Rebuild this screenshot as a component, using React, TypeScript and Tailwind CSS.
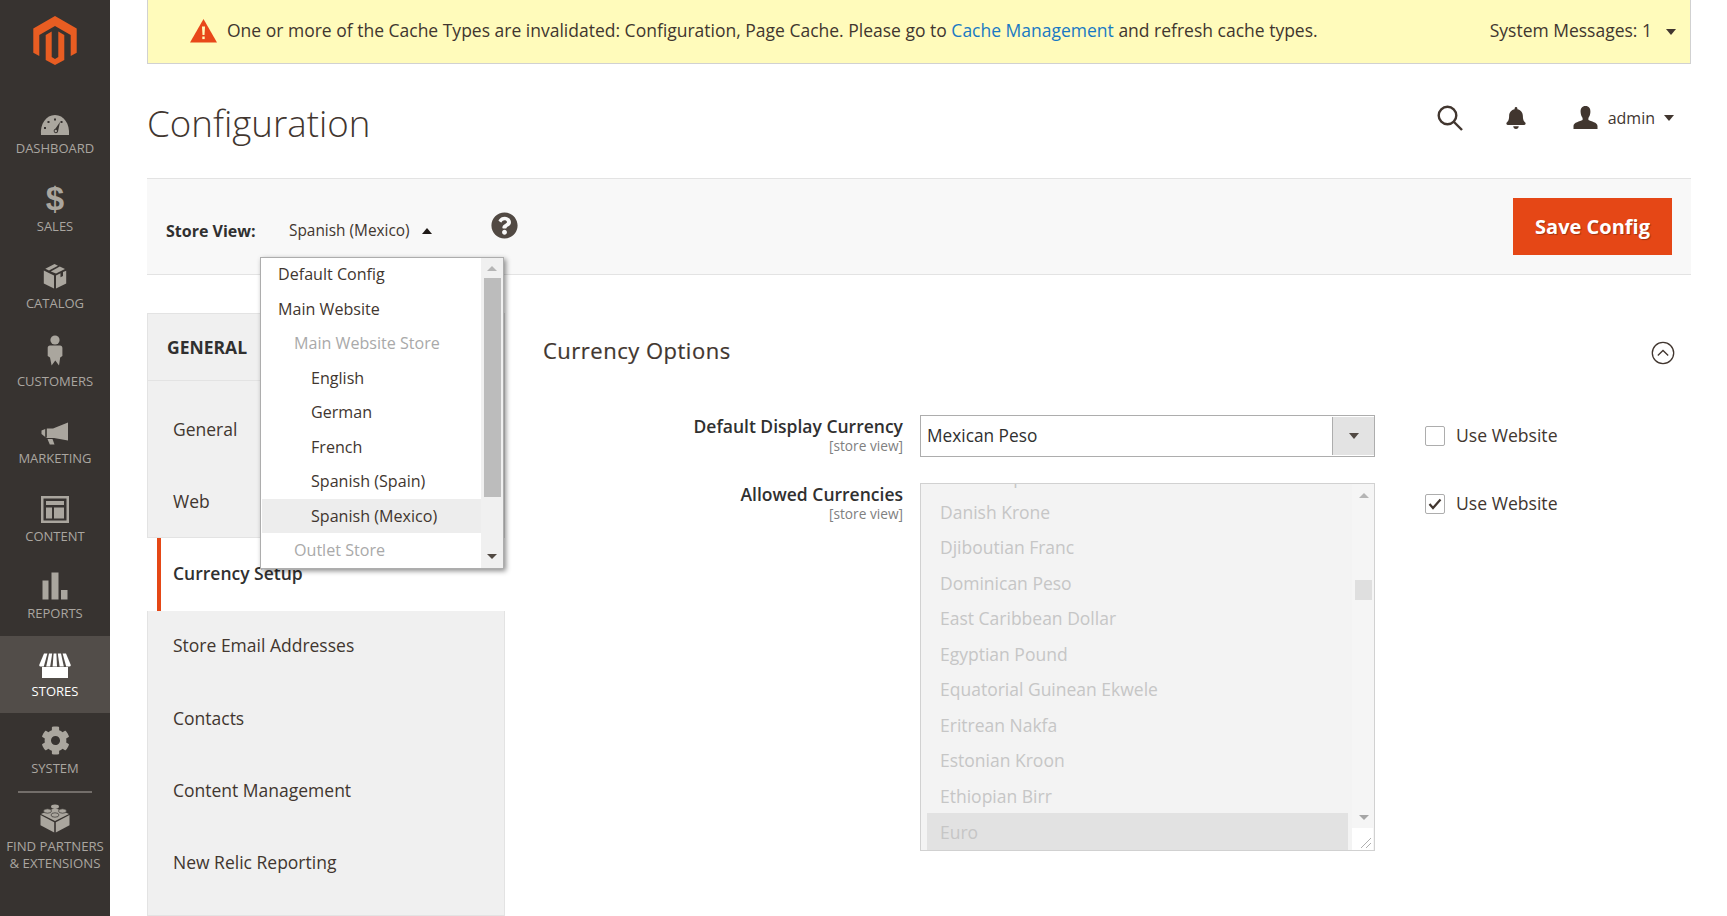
import React from 'react';
import { FaBell, FaCog, FaQuestionCircle } from 'react-icons/fa';

const LogoIcon = () => (
    <svg width="44" height="49" viewBox="0 0 44 49" fill="#e85d22">
        <path d="M22 0 L43.7 12.4 V36.7 L37.7 40 V19 L22 10 L6.3 19 V40 L0.3 36.7 V12.4 Z" />
        <path d="M12.7 19 L18.7 15.5 V41 L22 43 L25.3 41 V15.5 L31.3 19 V44 L22 49 L12.7 44 Z" />
    </svg>
);

const DashboardIcon = () => (
    <svg width="30" height="22" viewBox="0 0 30 22" fill="#aaa69e">
        <path fillRule="evenodd" d="M1 21 C0 10 6 1 15 1 C24 1 30 10 29 21 Z M14 4.5 h2 v2 h-2 Z M7.5 7 h2 v2 h-2 Z M20.5 7 h2 v2 h-2 Z M4 13 h2 v2 h-2 Z" />
        <path d="M20 8 L18 17.5 C17.5 20 13.5 19.5 13.7 16.8 C13.8 15.8 14.5 15 15.5 14.5 Z" fill="#373330" />
        <circle cx="15.8" cy="17" r="1.2" fill="#aaa69e" />
    </svg>
);

const CatalogIcon = () => (
    <svg width="24" height="26" viewBox="0 0 24 26" fill="#aaa69e">
        <path d="M11.5 1 L15 2.8 L6 7.6 L2.3 5.7 Z" />
        <path d="M16.8 3.6 L22 6 L13 10.6 L7.8 8.4 Z" />
        <path d="M0.8 7.5 L11 12.4 V25.6 L0.8 20.6 Z" />
        <path d="M23.2 7.7 V20.6 L13 25.6 V12.4 L17.5 10.2 V14.2 L20 13 V8.9 Z" />
    </svg>
);

const CustomersIcon = () => (
    <svg width="16" height="31" viewBox="0 0 16 31" fill="#aaa69e">
        <circle cx="8" cy="5" r="4.6" />
        <path d="M3 10.5 H13 C14.6 10.5 15.4 11.5 15.4 13 V21 L13.2 22.5 L12 30.5 L8.3 25.5 L4.6 30.5 L3 22.5 L0.7 21 V13 C0.7 11.5 1.5 10.5 3 10.5 Z" />
    </svg>
);

const MarketingIcon = () => (
    <svg width="28" height="23" viewBox="0 0 28 23" fill="#aaa69e">
        <path d="M27 0.5 V18.5 L13 16 H5.5 L0.5 12 V8.5 L5.5 6.5 H12 Z" />
        <path d="M6.5 17 H11.5 L13.5 22.5 H8.8 Z" />
        <rect x="4.2" y="5.6" width="1.6" height="10" fill="#373330" />
    </svg>
);

const ContentIcon = () => (
    <svg width="28" height="28" viewBox="0 0 28 28">
        <path fillRule="evenodd" fill="#aaa69e" d="M0 0 H28 V27 H0 Z M2.5 2.5 V24.5 H25.5 V2.5 Z" />
        <path fill="#aaa69e" d="M5 5 H23 V9 H5 Z M5 11.5 H11 V22.5 H5 Z M13 11.5 H23 V22.5 H13 Z" />
    </svg>
);

const ReportsIcon = () => (
    <svg width="26" height="28" viewBox="0 0 26 28" fill="#aaa69e">
        <rect x="0.5" y="8.5" width="6" height="19" />
        <rect x="9.5" y="0.5" width="7" height="27" />
        <rect x="19" y="18" width="6.5" height="9.5" />
    </svg>
);

const StoresIcon = () => (
    <svg width="32" height="25" viewBox="0 0 32 25" fill="#ffffff">
        <path d="M3 14 H29 V25 H3 Z" />
        <path d="M5 0.5 H8.4 L4.8 13.6 H1.6 C0.4 13.6 0 12.6 0.4 11.6 Z" />
        <path d="M10 0.5 H13.2 L11.2 13.6 H7.2 Z" />
        <path d="M14.6 0.5 H17.4 L18 13.6 H13.6 Z" />
        <path d="M18.8 0.5 H22 L24.8 13.6 H20.6 Z" />
        <path d="M23.6 0.5 H27 L31.6 11.6 C32 12.6 31.6 13.6 30.4 13.6 H27.2 Z" />
    </svg>
);

const PartnersIcon = () => (
    <svg width="30" height="29" viewBox="0 0 30 29" fill="#aaa69e">
        <path d="M0.5 11 L14.2 18.2 V28.6 L0.5 21.2 Z" />
        <path d="M29.5 11 L15.8 18.2 V28.6 L29.5 21.2 Z" />
        <path d="M15 4 L29 10 L15 17 L1 10 Z" />
        <ellipse cx="15" cy="2.6" rx="4" ry="2.2" />
        <ellipse cx="7.5" cy="7" rx="4" ry="2.2" stroke="#373330" strokeWidth="0.7" />
        <ellipse cx="22.5" cy="7" rx="4" ry="2.2" stroke="#373330" strokeWidth="0.7" />
        <ellipse cx="15" cy="11" rx="4" ry="2.2" stroke="#373330" strokeWidth="0.7" />
    </svg>
);

const WarningIcon = () => (
    <svg width="27" height="24" viewBox="0 0 27 24">
        <path d="M13.5 0 L27 23.5 H0 Z" fill="#e8481a" />
        <path d="M12 7.5 H15 L14.5 16 H12.5 Z" fill="#fffbbb" />
        <rect x="12.3" y="17.5" width="2.4" height="2.6" fill="#fffbbb" />
    </svg>
);

const UserIcon = () => (
    <svg width="25" height="23" viewBox="0 0 25 23" fill="#41362f">
        <path d="M12.5 0 C16 0 17.6 2.5 17.4 6 C17.3 8.6 16.4 10.6 15.4 12 V14 C18 15.6 24.5 16.2 24.5 20 V23 H0.5 V20 C0.5 16.2 7 15.6 9.6 14 V12 C8.6 10.6 7.7 8.6 7.6 6 C7.4 2.5 9 0 12.5 0 Z" />
    </svg>
);

const Caret = ({ up = false, color = 'border-t-[#41362f]' }: { up?: boolean; color?: string }) =>
    up ? (
        <span className="inline-block w-0 h-0 border-x-[5px] border-x-transparent border-b-[6px] border-b-[#1f1a17]" />
    ) : (
        <span className={`inline-block w-0 h-0 border-x-[5px] border-x-transparent border-t-[6px] ${color}`} />
    );

const navItems = [
    { label: 'DASHBOARD', icon: <DashboardIcon />, pad: 'pt-[18px]' },
    { label: 'SALES', icon: <span className="font-['Liberation_Sans',sans-serif] font-bold text-[33px] leading-none text-[#aaa69e]">$</span>, pad: 'pt-[9px]' },
    { label: 'CATALOG', icon: <CatalogIcon />, pad: 'pt-[9px]' },
    { label: 'CUSTOMERS', icon: <CustomersIcon />, pad: 'pt-[4px]' },
    { label: 'MARKETING', icon: <MarketingIcon />, pad: 'pt-[15px]' },
    { label: 'CONTENT', icon: <ContentIcon />, pad: 'pt-[13px]' },
    { label: 'REPORTS', icon: <ReportsIcon />, pad: 'pt-[9px]' },
    { label: 'STORES', icon: <StoresIcon />, pad: 'pt-[14px]', active: true },
    { label: 'SYSTEM', icon: <FaCog size={29} className="text-[#aaa69e]" />, pad: 'pt-[9px]' },
];

const Sidebar = () => (
    <aside className="w-[110px] h-full shrink-0 bg-[#373330] flex flex-col items-center">
        <div className="h-[93px] w-full flex flex-col items-center">
            <div className="mt-[16px]"><LogoIcon /></div>
            <div className="mt-[28px] w-[74px] h-px bg-[#736e6a]" />
        </div>
        {navItems.map((item) => (
            <div
                key={item.label}
                className={`w-full h-[77.5px] flex flex-col items-center ${item.active ? 'bg-[#524d49] text-white' : 'text-[#aaa6a0]'}`}
            >
                <div className={`h-[46px] flex items-center justify-center ${item.pad}`}>{item.icon}</div>
                <span className="text-[13px] leading-[18px]">{item.label}</span>
            </div>
        ))}
        <div className="w-[74px] h-[2px] bg-[#736e6a]" />
        <div className="w-full flex flex-col items-center text-[#aaa6a0]">
            <div className="mt-[11px]"><PartnersIcon /></div>
            <span className="mt-[5px] text-[13.2px] leading-[17px] text-center whitespace-nowrap">FIND PARTNERS<br />&amp; EXTENSIONS</span>
        </div>
    </aside>
);

const storeOptions = [
    { label: 'Default Config', cls: 'pl-[16px]' },
    { label: 'Main Website', cls: 'pl-[16px]' },
    { label: 'Main Website Store', cls: 'pl-[32px] text-[#a9a9a9]' },
    { label: 'English', cls: 'pl-[49px]' },
    { label: 'German', cls: 'pl-[49px]' },
    { label: 'French', cls: 'pl-[49px]' },
    { label: 'Spanish (Spain)', cls: 'pl-[49px]' },
    { label: 'Spanish (Mexico)', cls: 'pl-[49px] bg-[#ededed]' },
    { label: 'Outlet Store', cls: 'pl-[32px] text-[#a9a9a9]' },
];

const StoreDropdown = () => (
    <div className="absolute left-[113px] top-[78px] z-20 w-[244px] h-[312px] flex border border-[#adadad] bg-white shadow-[2px_2px_5px_rgba(0,0,0,0.45)] overflow-hidden">
        <ul className="w-[221px] -mt-px pl-px">
            {storeOptions.map((o) => (
                <li key={o.label} className={`h-[34.5px] flex items-center text-[16.1px] text-[#41362f] ${o.cls}`}>{o.label}</li>
            ))}
        </ul>
        <div className="relative w-[22px] bg-[#f0f0f0]">
            <span className="absolute left-[6px] top-[8px] w-0 h-0 border-x-[5px] border-x-transparent border-b-[5px] border-b-[#b5b5b5]" />
            <div className="absolute left-[3px] top-[20px] w-[17px] h-[219px] bg-[#bcbcbc]" />
            <span className="absolute left-[6px] bottom-[9px] w-0 h-0 border-x-[5px] border-x-transparent border-t-[5px] border-t-[#514943]" />
        </div>
    </div>
);

const menuItems = ['General', 'Web', 'Currency Setup', 'Store Email Addresses', 'Contacts', 'Content Management', 'New Relic Reporting'];

const ConfigMenu = () => (
    <nav className="w-[358px] shrink-0 h-[603px] text-[17.5px] text-[#41362f]">
        <div className="h-[67px] bg-[#f0f0f0] border-x border-t border-[#e3e3e3] flex items-center pl-[19px] font-bold text-[17.5px] text-[#303030]">
            GENERAL
        </div>
        <div className="h-[536px] pt-[12px] bg-[#f0f0f0] border border-[#e3e3e3]">
            {menuItems.map((label) =>
                label === 'Currency Setup' ? (
                    <div key={label} className="-ml-px -mr-px h-[73.5px] pl-[10px] bg-white border-t border-[#e3e3e3]">
                        <div className="h-full pl-[12px] pb-[3px] border-l-[4px] border-[#e54716] flex items-center font-semibold text-[#303030]">
                            {label}
                        </div>
                    </div>
                ) : (
                    <div
                        key={label}
                        className={`h-[72.2px] pl-[25px] flex items-center ${label === 'Store Email Addresses' ? '-mt-[1.5px]' : ''}`}
                    >
                        {label}
                    </div>
                )
            )}
        </div>
    </nav>
);

const currencies = [
    'Czech Republic Koruna',
    'Danish Krone',
    'Djiboutian Franc',
    'Dominican Peso',
    'East Caribbean Dollar',
    'Egyptian Pound',
    'Equatorial Guinean Ekwele',
    'Eritrean Nakfa',
    'Estonian Kroon',
    'Ethiopian Birr',
    'Euro',
];

const Label = ({ text }: { text: string }) => (
    <div className="w-[360px] shrink-0 text-right -mt-px">
        <div className="text-[17.5px] leading-[24px] font-semibold text-[#303030]">{text}</div>
        <div className="text-[13.7px] leading-[15px] text-[#808080]">[store view]</div>
    </div>
);

const UseWebsite = ({ checked = false }: { checked?: boolean }) => (
    <label className="flex items-center gap-[11px] text-[17.6px] text-[#41362f]">
        <span className="w-[20px] h-[20px] rounded-[2px] border border-[#adadad] bg-white flex items-center justify-center">
            {checked && (
                <svg width="14" height="12" viewBox="0 0 14 12" fill="none" stroke="#41362f" strokeWidth="2.2">
                    <path d="M1.5 6 L5 10 L12.5 1.5" />
                </svg>
            )}
        </span>
        <span className="-mt-px">Use Website</span>
    </label>
);

const CurrencyForm = () => (
    <section className="flex-1 pl-[38px]">
        <div className="h-[76px] flex items-center justify-between pr-[16px]">
            <h2 className="-mt-[2px] text-[22px] font-normal tracking-[0.5px] text-[#41362f] [-webkit-text-stroke:0.2px_#41362f]">Currency Options</h2>
            <svg width="24" height="24" viewBox="0 0 24 24" fill="none" stroke="#41362f" strokeWidth="1.3" className="mt-[3px]">
                <circle cx="12" cy="12" r="10.7" />
                <path d="M6.8 14.5 L12 9.5 L17.2 14.5" />
            </svg>
        </div>
        <div className="mt-[26px] flex">
            <Label text="Default Display Currency" />
            <div className="ml-[17px] w-[455px] h-[42px] border border-[#adadad] bg-white flex items-center justify-between">
                <span className="pl-[6px] pb-px text-[17.3px] text-[#303030]">Mexican Peso</span>
                <span className="w-[42px] h-[38px] bg-[#e3e3e3] border-l border-[#adadad] flex items-center justify-center">
                    <Caret color="border-t-[#514943]" />
                </span>
            </div>
            <div className="ml-[50px] h-[42px] flex items-center"><UseWebsite /></div>
        </div>
        <div className="mt-[26px] flex">
            <Label text="Allowed Currencies" />
            <div className="ml-[17px] relative w-[455px] h-[368px] border border-[#d1d1d1] bg-[#f3f3f3] overflow-hidden">
                <ul className="-mt-[25px] px-[6px] w-[433px]">
                    {currencies.map((c) => (
                        <li key={c} className={`h-[35.45px] pl-[13px] flex items-center text-[17.5px] text-[#c6c6c6] ${c === 'Euro' ? 'bg-[#e2e2e2] h-[37px]' : ''}`}>{c}</li>
                    ))}
                </ul>
                <div className="absolute right-0 top-0 bottom-0 w-[22px] bg-[#f5f5f5]">
                    <span className="absolute left-[7px] top-[9px] w-0 h-0 border-x-[5px] border-x-transparent border-b-[5px] border-b-[#b5b5b5]" />
                    <div className="absolute left-[3px] top-[96px] w-[17px] h-[20px] bg-[#dfdfdf]" />
                    <span className="absolute left-[7px] top-[331px] w-0 h-0 border-x-[5px] border-x-transparent border-t-[5px] border-t-[#a5a5a5]" />
                    <div className="absolute left-0 bottom-0 w-[21px] h-[22px] bg-white">
                        <svg width="21" height="22" viewBox="0 0 21 22" stroke="#9a9a9a" strokeWidth="0.8">
                            <path d="M9 20 L19 10 M14 20 L19 15" />
                        </svg>
                    </div>
                </div>
            </div>
            <div className="ml-[50px] h-[42px] flex items-center"><UseWebsite checked /></div>
        </div>
    </section>
);

export default function App() {
    return (
        <div className="w-[1727px] h-[916px] flex overflow-hidden bg-white font-['Open_Sans',sans-serif]">
            <Sidebar />
            <main className="flex-1 min-w-0 pl-[37px] pr-[36px]">
                <div className="h-[64px] bg-[#fffbbb] border-x border-b border-[#d1d1d1] flex items-center justify-between pl-[42px] pr-[14px] text-[17.5px] text-[#41362f]">
                    <div className="flex items-center gap-[10px]">
                        <span className="-mt-px"><WarningIcon /></span>
                        <span className="-mt-[2px]">
                            One or more of the Cache Types are invalidated: Configuration, Page Cache. Please go to{' '}
                            <span className="text-[#1979c3]">Cache Management</span> and refresh cache types.
                        </span>
                    </div>
                    <div className="flex items-center gap-[14px]">
                        <span className="-mt-[2px]">System Messages: 1</span>
                        <Caret />
                    </div>
                </div>

                <header className="h-[114px] flex items-center justify-between pr-[17px]">
                    <h1 className="text-[36.7px] font-light text-[#41362f] pt-[6px]">Configuration</h1>
                    <div className="flex items-center -mt-[7px]">
                        <svg width="26" height="26" viewBox="0 0 26 26" fill="none" stroke="#41362f" strokeWidth="2.4">
                            <circle cx="10.5" cy="10.5" r="8.8" />
                            <path d="M17 17 L25 25" />
                        </svg>
                        <FaBell size={22} className="ml-[42px] text-[#41362f]" />
                        <span className="ml-[46px]"><UserIcon /></span>
                        <span className="ml-[10px] text-[16px] text-[#41362f]">admin</span>
                        <span className="ml-[9px] flex"><Caret /></span>
                    </div>
                </header>

                <div className="relative h-[97px] bg-[#f8f8f8] border-y border-[#e3e3e3] flex items-center justify-between pr-[19px]">
                    <div className="flex items-center pl-[19px]">
                        <span className="w-[123px] font-bold text-[16px] text-[#303030] pt-[8px]">Store View:</span>
                        <span className="text-[15.4px] text-[#41362f] pt-[8px]">Spanish (Mexico)</span>
                        <span className="ml-[12px] flex pt-[8px]"><Caret up /></span>
                        <FaQuestionCircle size={27} className="ml-[59px] -mt-[2px] text-[#514943]" />
                    </div>
                    <button className="w-[159px] h-[57px] bg-[#e54716] text-white text-[20px] font-bold pt-[1px] [text-shadow:1px_1px_1px_rgba(0,0,0,0.3)]">
                        Save Config
                    </button>
                    <StoreDropdown />
                </div>

                <div className="mt-[38px] flex">
                    <ConfigMenu />
                    <CurrencyForm />
                </div>
            </main>
        </div>
    );
}
